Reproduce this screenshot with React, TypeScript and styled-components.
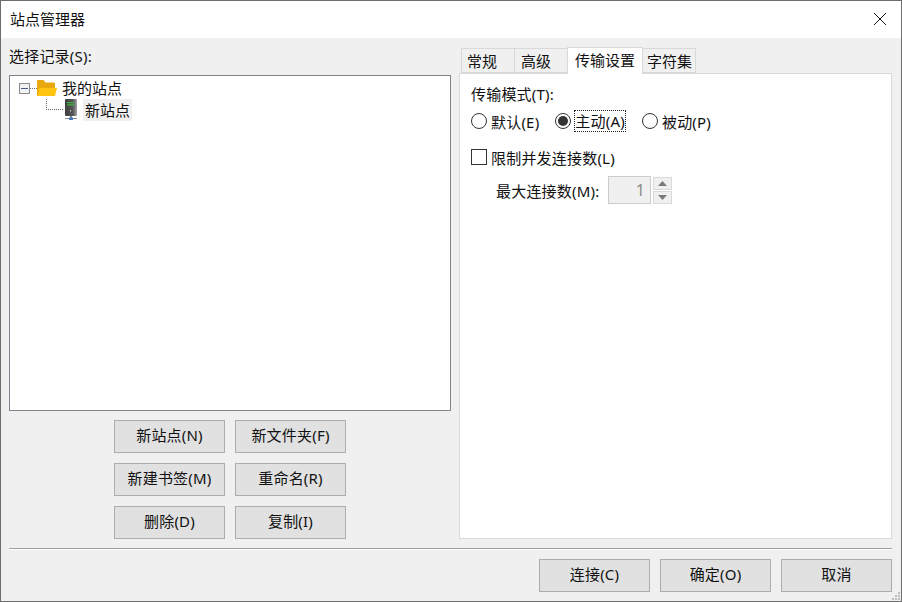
import React from "react";
import styled, { createGlobalStyle } from "styled-components";

const Global = createGlobalStyle`
  html, body { margin: 0; padding: 0; overflow: hidden; background: #f0f0f0; }
  * { box-sizing: border-box; }
  body { font-family: "Noto Sans", "Noto Sans CJK SC", sans-serif; font-size: 15px; letter-spacing: 0.2px; color: #111; }
`;

const Window = styled.div`
  position: relative;
  width: 902px;
  height: 602px;
  border: 1px solid #6d6d6d;
  background: #f0f0f0;
  display: flex;
  flex-direction: column;
`;
const TitleBar = styled.header`
  height: 37px;
  background: #fff;
  display: flex;
  align-items: center;
  justify-content: space-between;
  padding: 0 14px 2px 9px;
  line-height: 20px;
`;
const Title = styled.span`
  font-size: 15px;
  letter-spacing: 0;
`;
const Main = styled.div`
  flex: 1;
  display: flex;
  flex-direction: column;
  padding: 0 9px 8px 8px;
`;
const Columns = styled.div`
  display: flex;
  gap: 8px;
  height: 501px;
`;
const LeftPane = styled.section`
  width: 442px;
  display: flex;
  flex-direction: column;
`;
const PaneLabel = styled.label`
  height: 37px;
  line-height: 36px;
`;
const Tree = styled.div`
  height: 336px;
  background: #fff;
  border: 1px solid #82828c;
  padding: 1px 9px;
  display: flex;
  flex-direction: column;
`;
const TreeRow = styled.div<{ $indent?: number }>`
  height: 22px;
  display: flex;
  align-items: center;
  padding-left: ${(p) => p.$indent ?? 0}px;
`;
const Expander = styled.span`
  width: 11px;
  height: 11px;
  border: 1px solid #8a8a8a;
  background: #f2f2f6;
  display: flex;
  align-items: center;
  justify-content: center;
  &::after {
    content: "";
    width: 7px;
    height: 1px;
    background: #4a5a8c;
  }
`;
const DotH = styled.span`
  width: 7px;
  border-top: 1px dotted #777;
`;
const Elbow = styled.span`
  width: 17px;
  height: 11px;
  margin-top: -11px;
  border-left: 1px dotted #666;
  border-bottom: 1px dotted #666;
`;
const NodeText = styled.span<{ $selected?: boolean }>`
  height: 22px;
  line-height: 22px;
  letter-spacing: 0;
  padding: 0 2px;
  background: ${(p) => (p.$selected ? "#f0f0f0" : "transparent")};
`;
const Grid = styled.div`
  display: grid;
  grid-template-columns: 111px 111px;
  grid-auto-rows: 33px;
  gap: 10px;
  justify-content: start;
  margin: 9px 0 0 105px;
`;
const Button = styled.button`
  width: 111px;
  height: 33px;
  padding: 0 0 4px;
  border: 1px solid #adadad;
  background: #e1e1e1;
  color: #111;
  font: inherit;
  letter-spacing: inherit;
  line-height: 24px;
`;
const RightPane = styled.section`
  width: 433px;
  display: flex;
  flex-direction: column;
  padding-top: 8px;
`;
const TabStrip = styled.div`
  display: flex;
  height: 27px;
  padding-left: 2px;
  position: relative;
  z-index: 1;
  align-items: flex-end;
`;
const Tab = styled.div<{ $active?: boolean; $w: number; $pad: number }>`
  width: ${(p) => p.$w}px;
  height: ${(p) => (p.$active ? 27 : 25)}px;
  margin-bottom: ${(p) => (p.$active ? -1 : 0)}px;
  padding: 1px 0 0 ${(p) => p.$pad}px;
  background: ${(p) => (p.$active ? "#fff" : "#f0f0f0")};
  border: 1px solid #d9d9d9;
  border-bottom: ${(p) => (p.$active ? "none" : "1px solid #d9d9d9")};
  margin-right: -1px;
  line-height: 22px;
  letter-spacing: 0;
  white-space: nowrap;
`;
const Panel = styled.div`
  flex: 1;
  background: #fff;
  border: 1px solid #d9d9d9;
  padding: 9px 11px;
  display: flex;
  flex-direction: column;
`;
const Line = styled.div`
  height: 22px;
  line-height: 22px;
`;
const RadioRow = styled.div`
  display: flex;
  align-items: center;
  height: 22px;
  margin-top: 5px;
`;
const RadioItem = styled.div<{ $gap: number }>`
  display: flex;
  align-items: center;
  margin-right: ${(p) => p.$gap}px;
`;
const Radio = styled.span<{ $on?: boolean }>`
  width: 16px;
  height: 16px;
  border-radius: 50%;
  border: 1px solid #333;
  background: #fff;
  display: flex;
  align-items: center;
  justify-content: center;
  margin-right: 4px;
  &::after {
    content: "";
    display: ${(p) => (p.$on ? "block" : "none")};
    width: 10px;
    height: 10px;
    border-radius: 50%;
    background: #333;
  }
`;
const Focus = styled.span`
  outline: 1px dotted #222;
  height: 20px;
  line-height: 20px;
`;
const CheckRow = styled.div`
  display: flex;
  align-items: center;
  height: 22px;
  margin-top: 14px;
`;
const Checkbox = styled.span`
  width: 16px;
  height: 16px;
  border: 1px solid #333;
  background: #fff;
  margin-right: 4px;
`;
const SpinRow = styled.div`
  display: flex;
  align-items: center;
  margin-top: 8px;
  padding-left: 25px;
  height: 28px;
`;
const SpinLabel = styled.span`
  width: 112px;
`;
const SpinInput = styled.div`
  width: 43px;
  height: 28px;
  background: #f0f0f0;
  border: 1px solid #cccccc;
  color: #8a8a8a;
  text-align: right;
  padding-right: 5px;
  line-height: 26px;
  font-size: 16px;
`;
const SpinButtons = styled.div`
  margin-left: 2px;
  width: 19px;
  height: 27px;
  display: flex;
  flex-direction: column;
  gap: 1px;
`;
const SpinButton = styled.span`
  flex: 1;
  background: #f0f0f0;
  border: 1px solid #d9d9d9;
  display: flex;
  align-items: center;
  justify-content: center;
`;
const Separator = styled.div`
  height: 2px;
  margin-top: 9px;
  border-top: 1px solid #a0a0a0;
  border-bottom: 1px solid #fff;
`;
const Footer = styled.footer`
  display: flex;
  justify-content: flex-end;
  gap: 10px;
  margin-top: 9px;
`;
const Grip = styled.svg`
  position: absolute;
  right: 0;
  bottom: 0;
`;

const Close = () => (
  <svg width="14" height="14" viewBox="0 0 14 14" fill="none" stroke="#111" strokeWidth="1">
    <path d="M1 1l12 12M13 1L1 13" />
  </svg>
);

const FolderIcon = () => (
  <svg width="20" height="18" viewBox="0 0 20 18" style={{ margin: "0 3px 0 0" }}>
    <path d="M0 2a1 1 0 0 1 1-1h5.5l2 2.5H17a1 1 0 0 1 1 1V17H0z" fill="#e8a90f" />
    <path d="M0.5 17L2 9H20L18 17z" fill="#ffc311" />
  </svg>
);

const ServerIcon = () => (
  <svg width="16" height="22" viewBox="0 0 16 22" style={{ margin: "0 4px 0 0" }}>
    <defs>
      <linearGradient id="towerFill" x1="0" x2="1" y1="0" y2="0">
        <stop offset="0" stopColor="#3f3f3f" />
        <stop offset="0.65" stopColor="#555" />
        <stop offset="1" stopColor="#a3a3a3" />
      </linearGradient>
    </defs>
    <rect x="2" y="0" width="12" height="17" rx="1" fill="url(#towerFill)" />
    <rect x="4" y="3" width="7" height="1.3" fill="#3fae3f" />
    <rect x="4" y="5.2" width="7" height="1.3" fill="#3fae3f" />
    <rect x="7" y="11" width="1" height="1.5" fill="#d0d0d0" />
    <rect x="7" y="17" width="2" height="2" fill="#888" />
    <rect x="2" y="19" width="12" height="1" fill="#8d8d8d" />
    <rect x="6" y="18.5" width="4" height="2.5" fill="#3f78c4" />
  </svg>
);

const Arrow = ({ up }: { up?: boolean }) => (
  <svg width="9" height="5" viewBox="0 0 9 5">
    <path d={up ? "M4.5 0L9 5H0z" : "M0 0h9L4.5 5z"} fill="#7a7a7a" />
  </svg>
);

export default function App() {
  return (
    <>
      <Global />
      <Window>
        <TitleBar>
          <Title>站点管理器</Title>
          <Close />
        </TitleBar>
        <Main>
          <Columns>
            <LeftPane>
              <PaneLabel>选择记录(S):</PaneLabel>
              <Tree>
                <TreeRow>
                  <Expander />
                  <DotH />
                  <FolderIcon />
                  <NodeText>我的站点</NodeText>
                </TreeRow>
                <TreeRow $indent={27}>
                  <Elbow />
                  <ServerIcon />
                  <NodeText $selected>新站点</NodeText>
                </TreeRow>
              </Tree>
              <Grid>
                <Button>新站点(N)</Button>
                <Button>新文件夹(F)</Button>
                <Button>新建书签(M)</Button>
                <Button>重命名(R)</Button>
                <Button>删除(D)</Button>
                <Button>复制(I)</Button>
              </Grid>
            </LeftPane>
            <RightPane>
              <TabStrip>
                <Tab $w={54} $pad={5}>常规</Tab>
                <Tab $w={54} $pad={6}>高级</Tab>
                <Tab $w={76} $pad={7} $active>传输设置</Tab>
                <Tab $w={54} $pad={4}>字符集</Tab>
              </TabStrip>
              <Panel>
                <Line>传输模式(T):</Line>
                <RadioRow>
                  <RadioItem $gap={16}>
                    <Radio />
                    默认(E)
                  </RadioItem>
                  <RadioItem $gap={17}>
                    <Radio $on />
                    <Focus>主动(A)</Focus>
                  </RadioItem>
                  <RadioItem $gap={0}>
                    <Radio />
                    被动(P)
                  </RadioItem>
                </RadioRow>
                <CheckRow>
                  <Checkbox />
                  限制并发连接数(L)
                </CheckRow>
                <SpinRow>
                  <SpinLabel>最大连接数(M):</SpinLabel>
                  <SpinInput>1</SpinInput>
                  <SpinButtons>
                    <SpinButton><Arrow up /></SpinButton>
                    <SpinButton><Arrow /></SpinButton>
                  </SpinButtons>
                </SpinRow>
              </Panel>
            </RightPane>
          </Columns>
          <Separator />
          <Footer>
            <Button>连接(C)</Button>
            <Button>确定(O)</Button>
            <Button>取消</Button>
          </Footer>
        </Main>
        <Grip width="10" height="10" viewBox="0 0 10 10" fill="#bdbdbd">
          <rect x="7" y="1" width="2" height="2" />
          <rect x="4" y="4" width="2" height="2" />
          <rect x="7" y="4" width="2" height="2" />
          <rect x="1" y="7" width="2" height="2" />
          <rect x="4" y="7" width="2" height="2" />
          <rect x="7" y="7" width="2" height="2" />
        </Grip>
      </Window>
    </>
  );
}
